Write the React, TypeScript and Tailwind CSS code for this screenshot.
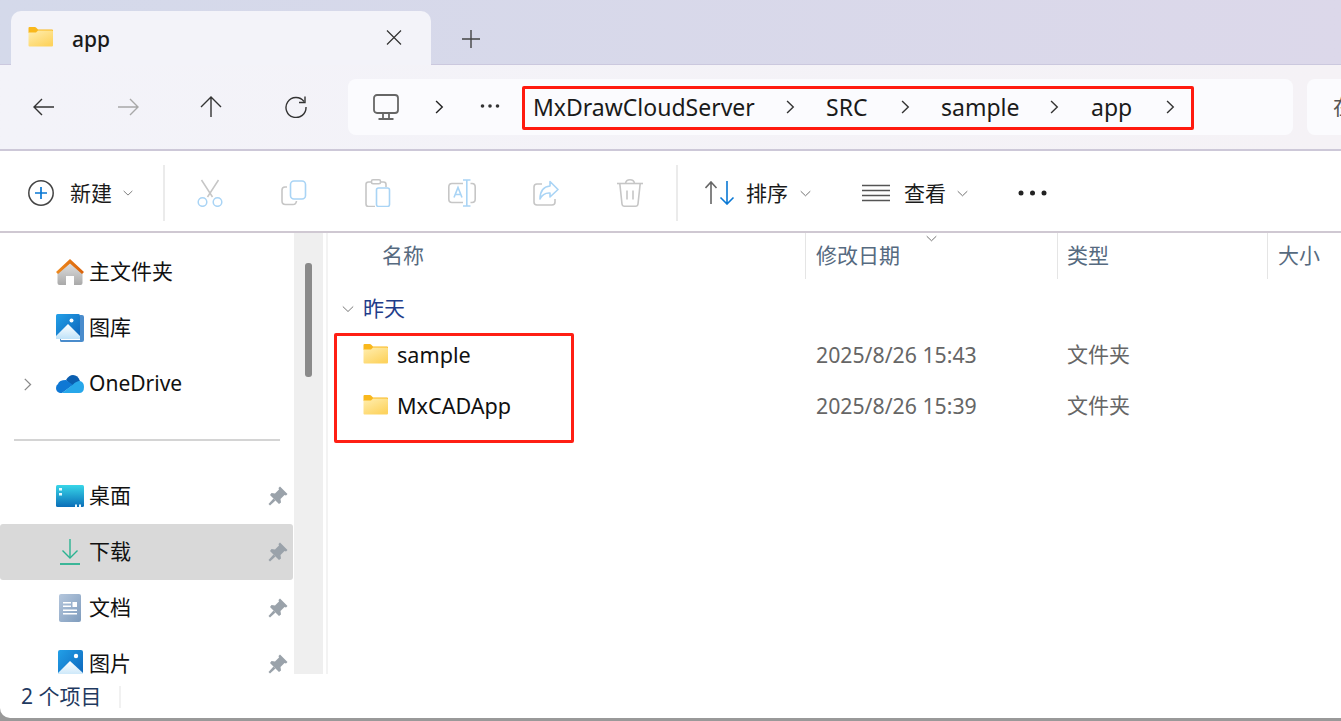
import React from "react";

const Chevron = ({ className = "", dir = "right", color = "#3a3a3a" }: { className?: string; dir?: "right" | "down"; color?: string }) => (
  <svg viewBox="0 0 12 12" className={className} fill="none" stroke={color} strokeWidth={dir === "right" ? 1.2 : 1}>
    {dir === "right" ? <path d="M3.5 0.8 L8.8 6 L3.5 11.2" /> : <path d="M0.8 3.5 L6 8.5 L11.2 3.5" />}
  </svg>
);

const Folder = ({ id, className = "" }: { id: string; className?: string }) => (
  <svg viewBox="0 0 25 20" className={className}>
    <defs>
      <linearGradient id={id} x1="0" y1="0" x2="0.7" y2="1">
        <stop offset="0" stopColor="#ffeeb0" />
        <stop offset="1" stopColor="#fdd35f" />
      </linearGradient>
    </defs>
    <path d="M0.5 1 Q0.5 0 1.5 0 H7 Q8 0 9 1.5 L10 2.5 H24 Q25 2.5 25 3.5 V6 H0.5 Z" fill="#f9b81c" />
    <path d="M0.5 5.5 L8 5.5 L10 3.6 H24 Q25 3.6 25 4.6 V18.5 Q25 19.5 24 19.5 H1.5 Q0.5 19.5 0.5 18.5 Z" fill={`url(#${id})`} />
  </svg>
);

const Home = () => (
  <svg viewBox="0 0 28 26" className="h-[26px] w-[28px]">
    <defs>
      <linearGradient id="homeBody" x1="0" y1="0" x2="0" y2="1">
        <stop offset="0" stopColor="#e2e2e2" />
        <stop offset="1" stopColor="#a9a9a9" />
      </linearGradient>
      <linearGradient id="homeRoof" x1="0" y1="0" x2="1" y2="0">
        <stop offset="0" stopColor="#ef8a1e" />
        <stop offset="1" stopColor="#d9620a" />
      </linearGradient>
    </defs>
    <path d="M1.5 13 L14 3 L26.5 13 V24 Q26.5 26 24.5 26 H18 V17 H10 V26 H3.5 Q1.5 26 1.5 24 Z" fill="url(#homeBody)" />
    <path d="M14 0 L28 13 L26 15 L14 4.5 L2 15 L0 13 Z" fill="url(#homeRoof)" />
  </svg>
);

const Gallery = () => (
  <svg viewBox="0 0 28 28" className="h-7 w-7">
    <defs>
      <linearGradient id="galBg" x1="0" y1="0" x2="1" y2="1">
        <stop offset="0" stopColor="#22a0e8" />
        <stop offset="1" stopColor="#0d62b8" />
      </linearGradient>
      <linearGradient id="galMt" x1="0" y1="0" x2="0" y2="1">
        <stop offset="0" stopColor="#ffffff" />
        <stop offset="1" stopColor="#bfe2f8" />
      </linearGradient>
    </defs>
    <path d="M4 20 V26.5 Q4 28 5.5 28 H26 Q28 28 28 26 V3 Q28 1 26 1 H24 V26 H5 Z" fill="#4a8ccc" />
    <rect x="0" y="0" width="24" height="25" rx="1.5" fill="url(#galBg)" />
    <path d="M0 22 L12 10 L24 22 V25 H0 Z" fill="url(#galMt)" />
    <circle cx="15.5" cy="6.5" r="2" fill="#ffffff" />
  </svg>
);

const Pictures = () => (
  <svg viewBox="0 0 25 28" className="h-7 w-[25px]">
    <defs>
      <linearGradient id="picBg" x1="0" y1="0" x2="1" y2="1">
        <stop offset="0" stopColor="#22a0e8" />
        <stop offset="1" stopColor="#0d62b8" />
      </linearGradient>
      <linearGradient id="picMt" x1="0" y1="0" x2="0" y2="1">
        <stop offset="0" stopColor="#ffffff" />
        <stop offset="1" stopColor="#bfe2f8" />
      </linearGradient>
    </defs>
    <rect x="0" y="0" width="25" height="28" rx="2" fill="url(#picBg)" />
    <path d="M0 23 L12 11 L25 23 V28 H0 Z" fill="url(#picMt)" />
    <circle cx="18" cy="6" r="2.2" fill="#ffffff" />
  </svg>
);

const OneDrive = () => (
  <svg viewBox="0 0 28 18" className="h-[18px] w-7">
    <path d="M10 5 Q13 0 17 0 Q22 0 24 6 L16 11 Z" fill="#0a5eb0" />
    <path d="M2 9 Q3 5 10 5 L17 10 L6 18 H4 Q0 17 0 13 Q0 10 2 9 Z" fill="#0f78d4" />
    <path d="M24 6 Q28 7 28 12 Q28 18 23 18 H6 L17 9.5 Q20 6 24 6 Z" fill="#27a7ea" />
  </svg>
);

const Desktop = () => (
  <svg viewBox="0 0 28 22" className="h-[22px] w-7">
    <defs>
      <linearGradient id="deskBg" x1="0" y1="0" x2="0" y2="1">
        <stop offset="0" stopColor="#38d6e8" />
        <stop offset="1" stopColor="#0a6eb8" />
      </linearGradient>
    </defs>
    <rect x="0" y="0" width="28" height="22" rx="1.5" fill="url(#deskBg)" />
    <rect x="3" y="3" width="3" height="2.5" fill="#e8fbff" />
    <rect x="3" y="8" width="3" height="2.5" fill="#e8fbff" />
    <rect x="19" y="19.5" width="2" height="2.5" fill="#e8fbff" />
    <rect x="23" y="19.5" width="2" height="2.5" fill="#e8fbff" />
  </svg>
);

const Download = () => (
  <svg viewBox="0 0 20 26" className="h-[26px] w-5" fill="none" stroke="#2ab391" strokeWidth="1.4">
    <path d="M10 0 V19" />
    <path d="M2.5 11.5 L10 19 L17.5 11.5" />
    <path d="M0 25 H20" strokeWidth="1.8" />
  </svg>
);

const Documents = () => (
  <svg viewBox="0 0 22 28" className="h-7 w-[22px]">
    <defs>
      <linearGradient id="docBg" x1="0" y1="0" x2="1" y2="1">
        <stop offset="0" stopColor="#b4c6dc" />
        <stop offset="1" stopColor="#7f9cbd" />
      </linearGradient>
    </defs>
    <rect x="0" y="0" width="22" height="28" rx="2" fill="url(#docBg)" />
    <rect x="4" y="8" width="8" height="1.5" fill="#fff" />
    <rect x="4" y="11.5" width="8" height="1.5" fill="#fff" />
    <rect x="13.5" y="8" width="4.5" height="5" fill="#fff" />
    <rect x="4" y="15.5" width="14" height="1.5" fill="#fff" />
    <rect x="4" y="19" width="14" height="1.5" fill="#fff" />
  </svg>
);

const Pin = () => (
  <svg viewBox="0 0 20 20" className="h-5 w-5" fill="#9aa2aa">
    <path d="M12 0.5 L19.5 8 L18 9.5 L16.5 9 L12.5 13 L13 16.5 L11 18 L2 9 L3.5 7 L7 7.5 L11 3.5 L10.5 2 Z" />
    <path d="M5.5 12.5 L7.5 14.5 L2 19.5 L0.5 18 Z" />
  </svg>
);

const G = "#c6c6c6";
const B = "#a9d4f5";

const Cut = () => (
  <svg viewBox="0 0 28 28" className="h-7 w-7" fill="none" strokeWidth="1.5">
    <path d="M5.5 1 L16.5 18 M22.5 1 L11.5 18" stroke={G} />
    <circle cx="6.5" cy="23" r="4.3" stroke={B} />
    <circle cx="21.5" cy="23" r="4.3" stroke={B} />
  </svg>
);
const Copy = () => (
  <svg viewBox="0 0 26 26" className="h-[26px] w-[26px]" fill="none" strokeWidth="1.6">
    <path d="M6 7 H4 Q1 7 1 10 V21 Q1 24.5 4.5 24.5 H12 Q15 24.5 15.5 21" stroke={G} />
    <rect x="9.5" y="1" width="15" height="18" rx="3.5" stroke={B} />
  </svg>
);
const Paste = () => (
  <svg viewBox="0 0 26 28" className="h-7 w-[26px]" fill="none" strokeWidth="1.6">
    <path d="M6.5 3 H3.5 Q1 3 1 5.5 V25 Q1 27.5 3.5 27.5 H10 M15.5 3 H18.5 Q21 3 21 5.5 V8" stroke={G} />
    <rect x="6.5" y="0.8" width="9" height="4" rx="1.5" stroke={G} />
    <rect x="11.5" y="9" width="13" height="18.5" rx="2" stroke={B} />
  </svg>
);
const Rename = () => (
  <svg viewBox="0 0 28 28" className="h-7 w-7" fill="none" strokeWidth="1.6">
    <path d="M15 4.5 H4 Q0.8 4.5 0.8 8 V20 Q0.8 23.5 4 23.5 H15 M22.5 4.5 H24 Q27.2 4.5 27.2 8 V20 Q27.2 23.5 24 23.5 H22.5" stroke={G} />
    <path d="M18.8 1 V27 M15 1 H22.5 M15 27 H22.5" stroke={B} />
    <path d="M6 18.5 L10 8.5 L14 18.5 M7.3 15.5 H12.7" stroke={B} />
  </svg>
);
const Share = () => (
  <svg viewBox="0 0 26 28" className="h-7 w-[26px]" fill="none" strokeWidth="1.6">
    <path d="M9 5 H4 Q1 5 1 8 V23 Q1 26 4 26 H19 Q22 26 22 23 V20" stroke={G} />
    <path d="M17 2.5 L25 10.5 L17 18 V14 Q10 13.5 7 20 Q7 8 17 7 Z" stroke={B} strokeLinejoin="round" />
  </svg>
);
const Trash = () => (
  <svg viewBox="0 0 28 28" className="h-7 w-7" fill="none" stroke={G} strokeWidth="1.6">
    <path d="M1 4.5 H27" />
    <path d="M9.5 4.5 Q10 0.8 14 0.8 Q18 0.8 18.5 4.5" />
    <path d="M3.8 4.5 L6 25 Q6.3 27.2 8.5 27.2 H19.5 Q21.7 27.2 22 25 L24.2 4.5" />
    <path d="M11 11.5 V20.5 M17 11.5 V20.5" />
  </svg>
);

const NAV = [
  { name: "主文件夹", icon: <Home /> },
  { name: "图库", icon: <Gallery /> },
  { name: "OneDrive", icon: <OneDrive />, expand: true },
  { divider: true },
  { name: "桌面", icon: <Desktop />, pin: true },
  { name: "下载", icon: <Download />, pin: true, active: true },
  { name: "文档", icon: <Documents />, pin: true },
  { name: "图片", icon: <Pictures />, pin: true },
] as const;

const FILES = [
  { name: "sample", date: "2025/8/26 15:43" },
  { name: "MxCADApp", date: "2025/8/26 15:39" },
];

const CRUMBS = [
  { label: "MxDrawCloudServer", w: "w-[221px]", cl: "ml-[29px]", before: "" },
  { label: "SRC", w: "w-[42px]", cl: "ml-[30px]", before: "ml-[29px]" },
  { label: "sample", w: "w-[77px]", cl: "ml-[29px]", before: "ml-[29px]" },
  { label: "app", w: "w-[41px]", cl: "ml-[31px]", before: "ml-[30px]" },
];

export default function App() {
  return (
    <div className="relative flex h-[721px] w-[1341px] flex-col overflow-hidden bg-[#999999] [font-family:'Noto_Sans','Noto_Sans_CJK_SC',sans-serif] text-[21px] text-[#111111]">
      {/* Tab strip */}
      <div className="flex h-[65px] shrink-0 items-end border-b border-[#cbc8de] bg-gradient-to-r from-[#d4d9ea] to-[#dcd8ea] pl-[11px]">
        <div className="-mb-px flex h-[54px] w-[420px] shrink-0 items-center rounded-t-[10px] bg-[#f3f3f9] pl-[17px]">
          <Folder id="tabFolder" className="h-5 w-[25px] shrink-0 -translate-y-[1px]" />
          <span className="ml-[19px] w-[314px] shrink-0 pt-[4px] text-[21px] font-medium text-[#1a1a1a]">app</span>
          <svg viewBox="0 0 16 16" className="h-4 w-4 shrink-0 -translate-y-[0.5px]" fill="none" stroke="#333" strokeWidth="1.2">
            <path d="M1 1 L15 15 M15 1 L1 15" />
          </svg>
        </div>
        <svg viewBox="0 0 18 18" className="mb-[16px] ml-[31px] h-[18px] w-[18px] shrink-0" fill="none" stroke="#444" strokeWidth="1.4">
          <path d="M9 0 V18 M0 9 H18" />
        </svg>
      </div>

      {/* Address row */}
      <div className="flex h-[86px] shrink-0 items-center border-b-2 border-[#cdc8d8] bg-gradient-to-r from-[#f3f3f9] to-[#f5f2f6]">
        <div className="flex w-[348px] shrink-0 items-center">
          <svg viewBox="0 0 22 20" className="ml-[33px] h-5 w-[22px] shrink-0" fill="none" stroke="#333" strokeWidth="1.4">
            <path d="M21 10 H1 M9 2 L1 10 L9 18" />
          </svg>
          <svg viewBox="0 0 22 20" className="ml-[62px] h-5 w-[22px] shrink-0" fill="none" stroke="#a8a8a8" strokeWidth="1.4">
            <path d="M1 10 H21 M13 2 L21 10 L13 18" />
          </svg>
          <svg viewBox="0 0 22 22" className="ml-[61px] h-[22px] w-[22px] shrink-0" fill="none" stroke="#333" strokeWidth="1.4">
            <path d="M11 21 V1 M1 11 L11 1 L21 11" />
          </svg>
          <svg viewBox="0 0 22 22" className="ml-[63px] h-[22px] w-[22px] shrink-0" fill="none" stroke="#333" strokeWidth="1.4">
            <path d="M19 5.5 A10 10 0 1 0 21 11" />
            <path d="M20 0.5 V6.5 H14" />
          </svg>
        </div>
        <div className="relative flex h-14 w-[945px] shrink-0 items-center rounded-[8px] bg-[#fbfbfe] text-[23px] text-[#1a1a1a]">
          <svg viewBox="0 0 26 26" className="ml-[25px] h-[26px] w-[26px] shrink-0" fill="none" stroke="#666" strokeWidth="1.8">
            <rect x="1" y="1" width="24" height="18" rx="3" />
            <path d="M10 19.5 V24 M16 19.5 V24 M5.5 25 H20.5" />
          </svg>
          <Chevron className="ml-[33px] h-[14px] w-[14px] shrink-0" color="#222" />
          <svg viewBox="0 0 20 6" className="ml-[34px] h-[6px] w-5 shrink-0 -translate-y-[1px]" fill="#333">
            <circle cx="2.5" cy="3" r="1.8" />
            <circle cx="10" cy="3" r="1.8" />
            <circle cx="17.5" cy="3" r="1.8" />
          </svg>
          <div className="ml-[33px] flex items-center">
            {CRUMBS.map((c) => (
              <div key={c.label} className={`flex items-center ${c.before}`}>
                <span className={`${c.w} whitespace-nowrap`}>{c.label}</span>
                <Chevron className={`h-[14px] w-[14px] shrink-0 ${c.cl}`} color="#333" />
              </div>
            ))}
          </div>
          <div className="absolute left-[174px] top-[7px] h-[44px] w-[672px] rounded-[2px] border-[3px] border-[#ff1a0f]" />
        </div>
        <div className="ml-[14px] flex h-14 flex-1 items-center overflow-hidden rounded-l-[8px] bg-[#fbfbfe] pl-[26px] text-[21px] text-[#555555]">
          <span className="whitespace-nowrap">在 app 中搜索</span>
        </div>
      </div>

      {/* Command bar */}
      <div className="flex h-[82px] shrink-0 items-center border-b-2 border-[#cfc8d2] bg-white pt-[4px] text-[#1b1b1b]">
        <svg viewBox="0 0 26 26" className="ml-[28px] h-[26px] w-[26px] shrink-0" fill="none" strokeWidth="1.5">
          <circle cx="13" cy="13" r="12.2" stroke="#444" />
          <path d="M13 7 V19 M7 13 H19" stroke="#0a78d4" strokeWidth="1.7" />
        </svg>
        <span className="ml-4 w-[42px] whitespace-nowrap pt-[2px]">新建</span>
        <Chevron dir="down" className="ml-[11px] h-[10px] w-[10px] shrink-0" color="#666" />
        <div className="ml-[30px] h-14 w-[2px] shrink-0 bg-[#ebebeb]" />
        <div className="ml-[3px] flex shrink-0">
          {[<Cut />, <Copy />, <Paste />, <Rename />, <Share />, <Trash />].map((ic, i) => (
            <div key={i} className="flex w-[84px] items-center justify-center">
              {ic}
            </div>
          ))}
        </div>
        <div className="ml-[4px] h-14 w-[2px] shrink-0 bg-[#ebebeb]" />
        <svg viewBox="0 0 30 24" className="ml-[27px] h-6 w-[30px] shrink-0" fill="none" strokeWidth="1.6">
          <path d="M6 23 V1 M0.5 7 L6 1 L11.5 7" stroke="#666" />
          <path d="M22 0 V23 M15.5 16.5 L22 23 L28.5 16.5" stroke="#0a78d4" />
        </svg>
        <span className="ml-[11px] w-[43px] whitespace-nowrap pt-[2px]">排序</span>
        <Chevron dir="down" className="ml-[11px] h-[11px] w-[11px] shrink-0" color="#666" />
        <svg viewBox="0 0 28 18" className="ml-[51px] h-[18px] w-7 shrink-0" fill="none" stroke="#555" strokeWidth="1.6">
          <path d="M0 1.5 H28 M0 6.5 H28 M0 11.5 H28 M0 16.5 H28" />
        </svg>
        <span className="ml-[14px] w-[42px] whitespace-nowrap pt-[2px]">查看</span>
        <Chevron dir="down" className="ml-[11px] h-[11px] w-[11px] shrink-0" color="#666" />
        <svg viewBox="0 0 29 6" className="ml-[50px] h-[6px] w-[29px] shrink-0" fill="#222">
          <circle cx="3" cy="3" r="2.5" />
          <circle cx="14.5" cy="3" r="2.5" />
          <circle cx="26" cy="3" r="2.5" />
        </svg>
      </div>

      {/* Body */}
      <div className="flex h-[441px] shrink-0 overflow-hidden bg-white">
        <nav className="w-[294px] shrink-0 pt-[11px]">
          {NAV.map((item, i) =>
            "divider" in item ? (
              <div key={i} className="flex h-14 items-center px-[14px]">
                <div className="h-[2px] w-full bg-[#d4d4d4]" />
              </div>
            ) : (
              <div key={i} className={`mr-px flex h-14 items-center rounded-[3px] ${"active" in item ? "bg-[#d9d9d9]" : ""}`}>
                <div className="flex w-[56px] shrink-0 pl-[21px]">
                  {"expand" in item && <Chevron className="h-[13px] w-[13px]" color="#8a8a8a" />}
                </div>
                <div className="flex w-[28px] shrink-0 justify-center">{item.icon}</div>
                <span className="ml-[5px] whitespace-nowrap text-[21px]">{item.name}</span>
                {"pin" in item && (
                  <span className="ml-auto mr-[5px]">
                    <Pin />
                  </span>
                )}
              </div>
            ),
          )}
        </nav>
        <div className="w-[29px] shrink-0 bg-[#efefef] pl-[11px] pt-[30px]">
          <div className="h-[114px] w-[7px] rounded-[3px] bg-[#8a8a8a]" />
        </div>
        <div className="ml-[3px] w-[2px] shrink-0 bg-[#f3f3f3]" />

        <div className="relative flex-1">
          <div className="flex h-[46px] text-[#566a80]">
            <div className="w-[477px] pl-[54px] pt-[7px]">名称</div>
            <div className="relative w-[252px] border-l border-[#e5e5e5] pl-[10px] pt-[7px]">
              修改日期
              <Chevron dir="down" className="absolute left-[120px] top-0 h-[11px] w-[11px]" color="#666" />
            </div>
            <div className="w-[210px] border-l border-[#e5e5e5] pl-[9px] pt-[7px]">类型</div>
            <div className="flex-1 border-l border-[#e5e5e5] pl-[10px] pt-[7px]">大小</div>
          </div>

          <div className="flex h-[51px] items-center pl-[14px] pt-[9px]">
            <Chevron dir="down" className="h-3 w-3 shrink-0" color="#777" />
            <span className="ml-[9px] text-[#1f3d8a]">昨天</span>
          </div>

          {FILES.map((f, i) => (
            <div key={f.name} className="flex h-[51px] items-center">
              <div className="flex w-[477px] items-center pl-[35px]">
                <Folder id={`row${i}`} className="h-5 w-[25px] shrink-0 -translate-y-[1px]" />
                <span className="ml-[9px] text-[21.6px]">{f.name}</span>
              </div>
              <div className="w-[252px] pb-[2px] pl-[11px] text-[21.25px] text-[#666666]">{f.date}</div>
              <div className="pb-[2px] pl-[10px] text-[#666666]">文件夹</div>
            </div>
          ))}

          <div className="absolute left-[6px] top-[100px] h-[110px] w-[240px] rounded-[2px] border-[3px] border-[#ff1f14]" />
        </div>
      </div>

      {/* Status bar */}
      <div className="flex h-[44px] shrink-0 items-center rounded-bl-[10px] bg-white pl-[21px] pt-[2px] text-[21px] text-[#1f3a60]">
        <span className="w-[98px] whitespace-nowrap">2 个项目</span>
        <div className="h-[22px] w-[2px] shrink-0 bg-[#f1f1f1]" />
      </div>
    </div>
  );
}
